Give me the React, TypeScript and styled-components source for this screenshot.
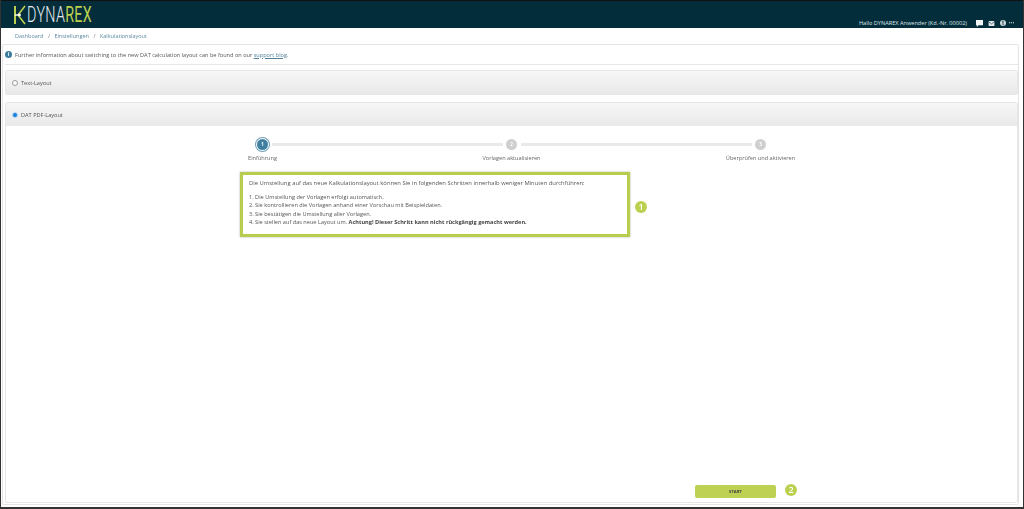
import { createGlobalStyle, styled } from "styled-components";

const GlobalStyle = createGlobalStyle`
    html, body {
        margin: 0;
        padding: 0;
        background: #fff;
    }
    body {
        font-family: "Open Sans", "Liberation Sans", sans-serif;
        font-size: 5.6px;
        color: #555;
    }
`

const Frame = styled.div`
    width: 1024px;
    height: 509px;
    box-sizing: border-box;
    display: flex;
    flex-direction: column;
    border: 1px solid #333;
    border-top: 0;
    border-bottom-width: 2px;
    overflow: hidden;
    filter: blur(0.3px);
`

const Header = styled.header`
    height: 28px;
    flex: none;
    box-sizing: border-box;
    background: #032d3b;
    border-top: 1px solid #111;
    display: flex;
    align-items: center;
    justify-content: space-between;
    padding: 0 9px 0 12px;
`

const Logo = styled.div`
    display: flex;
    align-items: center;
    gap: 0;
`

const LogoText = styled.div`
    margin-top: 1px;
    font-family: "Roboto", "Liberation Sans", sans-serif;
    font-weight: 300;
    font-size: 22px;
    line-height: 22px;
    letter-spacing: 0.5px;
    color: #e8eef0;
    transform: scaleX(0.65);
    transform-origin: left center;
    white-space: nowrap;

    b {
        font-weight: 400;
        color: #bcd04f;
    }
`

const UserArea = styled.div`
    display: flex;
    align-items: center;
    gap: 5px;
    margin-top: 17px;
    height: 10px;
    color: #dfe7ea;
`

const UserName = styled.span`
    font-size: 5.6px;
    margin-right: 4px;
    white-space: nowrap;
`

const Breadcrumb = styled.nav`
    height: 16px;
    flex: none;
    display: flex;
    align-items: center;
    gap: 4.5px;
    padding-left: 14px;
    color: #5d8aa0;
    font-size: 5.5px;

    i {
        font-style: normal;
        color: #777;
    }
`

const Card = styled.main`
    flex: 1;
    min-height: 0;
    display: flex;
    flex-direction: column;
    margin: 0 4px 2px 1px;
    padding: 0 0 0 2px;
    border: 1px solid #e4e4e4;
    border-radius: 2px;
`

const Notice = styled.div`
    height: 19px;
    flex: none;
    display: flex;
    align-items: center;
    gap: 3px;
    border-bottom: 1px solid #e6e6e6;
    font-size: 5.6px;
    color: #555;

    a {
        color: #4f8199;
        text-decoration: underline;
    }
`

const InfoDot = styled.span`
    width: 7px;
    height: 7px;
    border-radius: 50%;
    background: #3d7c9c;
    color: #fff;
    font-size: 5px;
    font-weight: 700;
    line-height: 7px;
    text-align: center;
`

const Panel = styled.section<{ $grow?: boolean }>`
    margin-top: ${p => (p.$grow ? "7px" : "5px")};
    flex: ${p => (p.$grow ? "1" : "none")};
    min-height: 0;
    display: flex;
    flex-direction: column;
    border: 1px solid #e6e6e6;
    border-radius: 2px;
    margin-bottom: ${p => (p.$grow ? "1px" : "0")};
`

const PanelHead = styled.div`
    height: 23px;
    flex: none;
    display: flex;
    align-items: center;
    gap: 3px;
    padding-left: 6px;
    background: linear-gradient(#f7f7f7, #e9e9e9);
    font-size: 5.6px;
    color: #555;
`

const Radio = styled.span<{ $on?: boolean }>`
    width: 6px;
    height: 6px;
    box-sizing: border-box;
    border-radius: 50%;
    background: ${p => (p.$on ? "#1a7fe0" : "#fff")};
    border: 1px solid ${p => (p.$on ? "#bcd8f5" : "#999")};
`

const PanelBody = styled.div`
    flex: 1;
    min-height: 0;
    display: flex;
    flex-direction: column;
    padding-top: 11px;
`

const Stepper = styled.ol`
    list-style: none;
    margin: 0;
    padding: 0;
    align-self: center;
    display: grid;
    grid-template-columns: repeat(3, 249px);
`

const Step = styled.li<{ $line?: boolean }>`
    position: relative;
    display: flex;
    flex-direction: column;
    align-items: center;
    gap: 2px;
    font-size: 5.6px;
    color: #666;

    ${p => p.$line && `
        &::after {
            content: "";
            position: absolute;
            top: 6px;
            left: calc(50% + 9px);
            width: 231px;
            height: 3px;
            background: #e9e9e9;
        }
    `}
`

const StepDot = styled.span<{ $active?: boolean }>`
    width: 11px;
    height: 11px;
    margin: 2px 0;
    border-radius: 50%;
    background: ${p => (p.$active ? "#3f7f9f" : "#cfcfcf")};
    box-shadow: ${p => (p.$active ? "0 0 0 1px #fff, 0 0 0 2px #6d9db5" : "none")};
    color: #fff;
    font-size: 4.5px;
    font-weight: 700;
    line-height: 11px;
    text-align: center;
`

const CalloutRow = styled.div`
    margin: 10px 0 0 234px;
    display: flex;
    align-items: center;
    gap: 5px;
`

const Callout = styled.div`
    width: 390px;
    height: 65px;
    flex: none;
    box-sizing: border-box;
    border: 3px solid #b9cc4e;
    box-shadow: 0 0 2px rgba(0, 0, 0, 0.3);
    padding: 4px 6px;
    font-size: 5.85px;
    line-height: 8.4px;
    color: #555;

    p {
        margin: 0 0 5.6px;
    }

    ol {
        list-style: none;
        margin: 0;
        padding: 0;
        font-size: 5.6px;
    }

    b {
        color: #444;
    }
`

const Badge = styled.span<{ $shift?: number }>`
    width: 12px;
    height: 12px;
    flex: none;
    margin-top: ${p => p.$shift ?? 0}px;
    border-radius: 50%;
    background: #bcd04f;
    color: #fff;
    font-size: 9px;
    font-weight: 600;
    line-height: 12px;
    text-align: center;
`

const ActionRow = styled.div`
    margin-top: auto;
    margin-bottom: 4px;
    align-self: flex-end;
    display: flex;
    align-items: center;
    gap: 9px;
    margin-right: 220px;
`

const StartButton = styled.button`
    width: 81px;
    height: 13px;
    padding: 0;
    border: 0;
    border-radius: 2px;
    background: #bfd152;
    color: #444;
    font-family: "Open Sans", sans-serif;
    font-size: 4.2px;
    font-weight: 700;
`

function LogoMark() {
    return (
        <svg width="14" height="20" viewBox="0 0 14 20" fill="none">
            <path d="M2 1v18" stroke="#bcd04f" strokeWidth="2"/>
            <path d="M12 1 5 10l7 9" stroke="#bcd04f" strokeWidth="1.6"/>
            <path d="M2 10h5" stroke="#fff" strokeWidth="1.4"/>
            <circle cx="6.5" cy="10" r="1.4" fill="#fff"/>
        </svg>
    )
}

function TopIcons() {
    return (
        <>
            <svg width="7" height="7" viewBox="0 0 8 8">
                <path d="M0 0h8v6H3L1 8V6H0z" fill="#f2f5f6"/>
            </svg>
            <svg width="7" height="5" viewBox="0 0 7 6">
                <rect width="7" height="6" rx="1" fill="#dfe7ea"/>
                <path d="M0 1l3.5 2.5L7 1" stroke="#032d3b" strokeWidth="0.7" fill="none"/>
            </svg>
            <svg width="6" height="6" viewBox="0 0 7 7">
                <circle cx="3.5" cy="3.5" r="3.5" fill="#cfdadf"/>
                <path d="M2 1h3L4 3.5 5 6H3z" fill="#032d3b" opacity="0.55"/>
            </svg>
            <svg width="5" height="2" viewBox="0 0 6 2" style={{marginLeft: -2}}>
                <path d="M0 0h1.3v1.4H0zM2.3 0h1.3v1.4H2.3zM4.6 0H6v1.4H4.6z" fill="#dfe7ea"/>
            </svg>
        </>
    )
}

export default function App() {
    return (
        <>
            <GlobalStyle/>
            <Frame>
                <Header>
                    <Logo>
                        <LogoMark/>
                        <LogoText>DYNA<b>REX</b></LogoText>
                    </Logo>
                    <UserArea>
                        <UserName>Hallo DYNAREX Anwender (Kd.-Nr. 00002)</UserName>
                        <TopIcons/>
                    </UserArea>
                </Header>
                <Breadcrumb>
                    <span>Dashboard</span><i>/</i>
                    <span>Einstellungen</span><i>/</i>
                    <span>Kalkulationslayout</span>
                </Breadcrumb>
                <Card>
                    <Notice>
                        <InfoDot>i</InfoDot>
                        <span>
                            Further information about switching to the new DAT calculation layout can be found on
                            our <a>support blog</a>.
                        </span>
                    </Notice>
                    <Panel>
                        <PanelHead><Radio/>Text-Layout</PanelHead>
                    </Panel>
                    <Panel $grow>
                        <PanelHead><Radio $on/>DAT PDF-Layout</PanelHead>
                        <PanelBody>
                            <Stepper>
                                <Step $line><StepDot $active>1</StepDot>Einführung</Step>
                                <Step $line><StepDot>2</StepDot>Vorlagen aktualisieren</Step>
                                <Step><StepDot>3</StepDot>Überprüfen und aktivieren</Step>
                            </Stepper>
                            <CalloutRow>
                                <Callout>
                                    <p>Die Umstellung auf das neue Kalkulationslayout können Sie in folgenden Schritten innerhalb weniger Minuten durchführen:</p>
                                    <ol>
                                        <li>1. Die Umstellung der Vorlagen erfolgt automatisch.</li>
                                        <li>2. Sie kontrollieren die Vorlagen anhand einer Vorschau mit Beispieldaten.</li>
                                        <li>3. Sie bestätigen die Umstellung aller Vorlagen.</li>
                                        <li>4. Sie stellen auf das neue Layout um. <b>Achtung! Dieser Schritt kann nicht rückgängig gemacht werden.</b></li>
                                    </ol>
                                </Callout>
                                <Badge $shift={4}>1</Badge>
                            </CalloutRow>
                            <ActionRow>
                                <StartButton>START</StartButton>
                                <Badge $shift={-3}>2</Badge>
                            </ActionRow>
                        </PanelBody>
                    </Panel>
                </Card>
            </Frame>
        </>
    )
}
